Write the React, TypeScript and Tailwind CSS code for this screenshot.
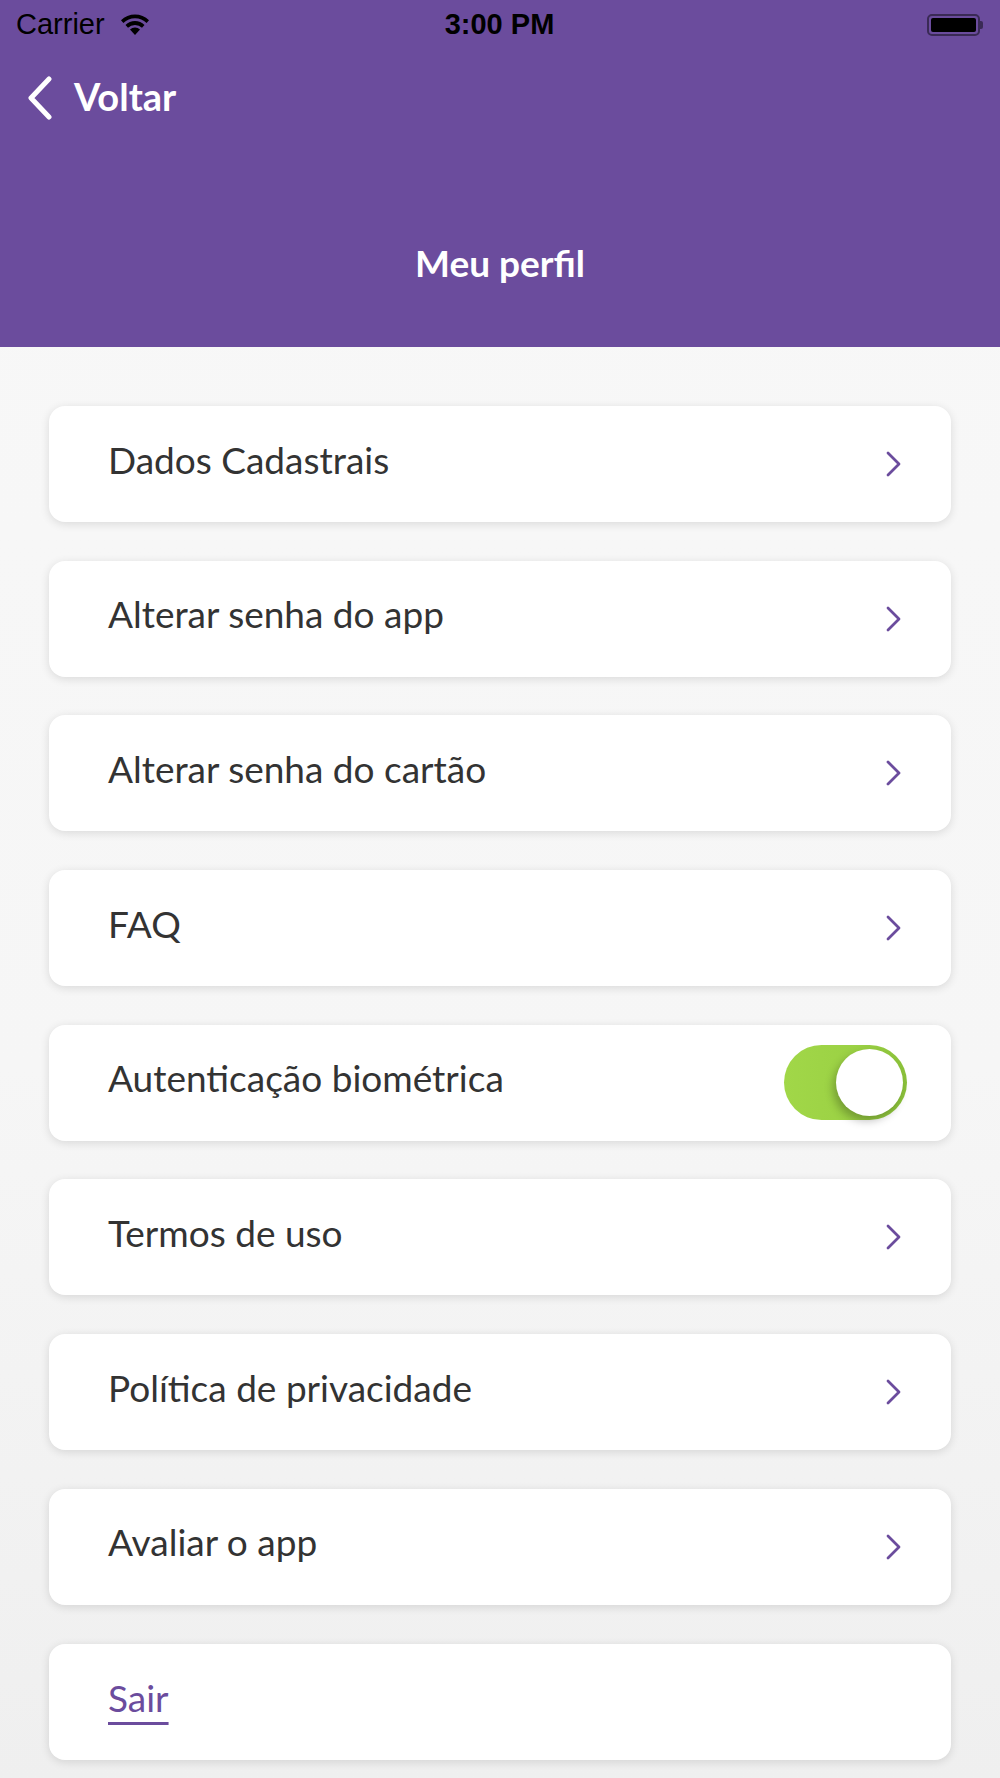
import React from 'react';

const PURPLE = '#6b4c9d';

const items: { label: string; toggle?: boolean }[] = [
  { label: 'Dados Cadastrais' },
  { label: 'Alterar senha do app' },
  { label: 'Alterar senha do cartão' },
  { label: 'FAQ' },
  { label: 'Autenticação biométrica', toggle: true },
  { label: 'Termos de uso' },
  { label: 'Política de privacidade' },
  { label: 'Avaliar o app' },
];

const Chevron: React.FC = () => (
  <svg width="16" height="26" viewBox="0 0 16 26" fill="none">
    <polyline points="2,2 13,13 2,24" stroke={PURPLE} strokeWidth="2.8" strokeLinecap="round" strokeLinejoin="round" />
  </svg>
);

const Wifi: React.FC = () => (
  <svg width="32" height="22" viewBox="0 0 32 22">
    <path d="M16 21 L11 15.5 A7.5 7.5 0 0 1 21 15.5 Z" fill="#000" />
    <path d="M6.5 11 A13.5 13.5 0 0 1 25.5 11 L23 13.8 A10 10 0 0 0 9 13.8 Z" fill="#000" />
    <path d="M2 6.2 A20 20 0 0 1 30 6.2 L27.6 9 A16.5 16.5 0 0 0 4.4 9 Z" fill="#000" />
  </svg>
);

const Battery: React.FC = () => (
  <div className="flex items-center">
    <div className="w-[53px] h-[22px] rounded-[5px] border-[2px] border-[#3a2a55] p-[2px]">
      <div className="w-full h-full rounded-[2px] bg-black" />
    </div>
    <div className="w-[3px] h-[8px] rounded-r-[2px] bg-[#3a2a55]" />
  </div>
);

const Toggle: React.FC = () => (
  <div className="mr-[-5px] w-[123px] h-[75px] rounded-full bg-[linear-gradient(90deg,#a1d748_0%,#9bd144_60%,#8bc23a_100%)] flex items-center justify-end px-[4px]">
    <div className="w-[67px] h-[67px] rounded-full bg-white shadow-[-3px_5px_8px_rgba(0,0,0,0.25)]" />
  </div>
);

const Row: React.FC<{ label: string; toggle?: boolean }> = ({ label, toggle }) => (
  <div className="h-[116px] bg-white rounded-[16px] shadow-[0_2px_10px_rgba(0,0,0,0.12)] flex items-center justify-between pl-[59px] pr-[49px]">
    <span className="text-[37px] text-[#333333] leading-none pb-[10px]">{label}</span>
    {toggle ? <Toggle /> : <Chevron />}
  </div>
);

const App: React.FC = () => {
  return (
    <div className="w-[1000px] min-h-[1778px] bg-[linear-gradient(180deg,#f8f8f8_0%,#f6f6f6_60%,#efefef_100%)]" style={{ fontFamily: 'Lato, "Noto Sans", sans-serif' }}>
      <header className="h-[347px] bg-[#6b4c9d] flex flex-col">
        <div className="h-[50px] grid grid-cols-3 items-center px-[16px] pr-[17px]" style={{ fontFamily: '"Liberation Sans", Arial, sans-serif' }}>
          <div className="flex items-center gap-[14px]">
            <span className="text-[29px] text-black">Carrier</span>
            <Wifi />
          </div>
          <div className="text-center text-[29px] font-bold text-black">3:00 PM</div>
          <div className="flex justify-end">
            <Battery />
          </div>
        </div>
        <div className="h-[96px] flex items-center pl-[27px] gap-[21px]">
          <svg width="26" height="44" viewBox="0 0 26 44" fill="none">
            <polyline points="22,3 4,22 22,41" stroke="#fff" strokeWidth="5" strokeLinecap="round" strokeLinejoin="round" />
          </svg>
          <span className="text-[38px] font-bold text-white leading-none pb-[4px]">Voltar</span>
        </div>
        <div className="flex-1 flex items-center justify-center pt-[35px]">
          <h1 className="text-[37px] font-bold text-white leading-none pb-[4px]">Meu perfil</h1>
        </div>
      </header>
      <main className="px-[49px] pt-[59px] pb-[20px] flex flex-col gap-[38.7px]">
        {items.map((item) => (
          <Row key={item.label} label={item.label} toggle={item.toggle} />
        ))}
        <div className="h-[116px] bg-white rounded-[16px] shadow-[0_2px_10px_rgba(0,0,0,0.12)] flex items-center pl-[59px]">
          <span className="text-[37px] leading-none text-[#6b4c9d] underline decoration-[3px] underline-offset-[10px] pb-[8px]">Sair</span>
        </div>
      </main>
    </div>
  );
};

export default App;
